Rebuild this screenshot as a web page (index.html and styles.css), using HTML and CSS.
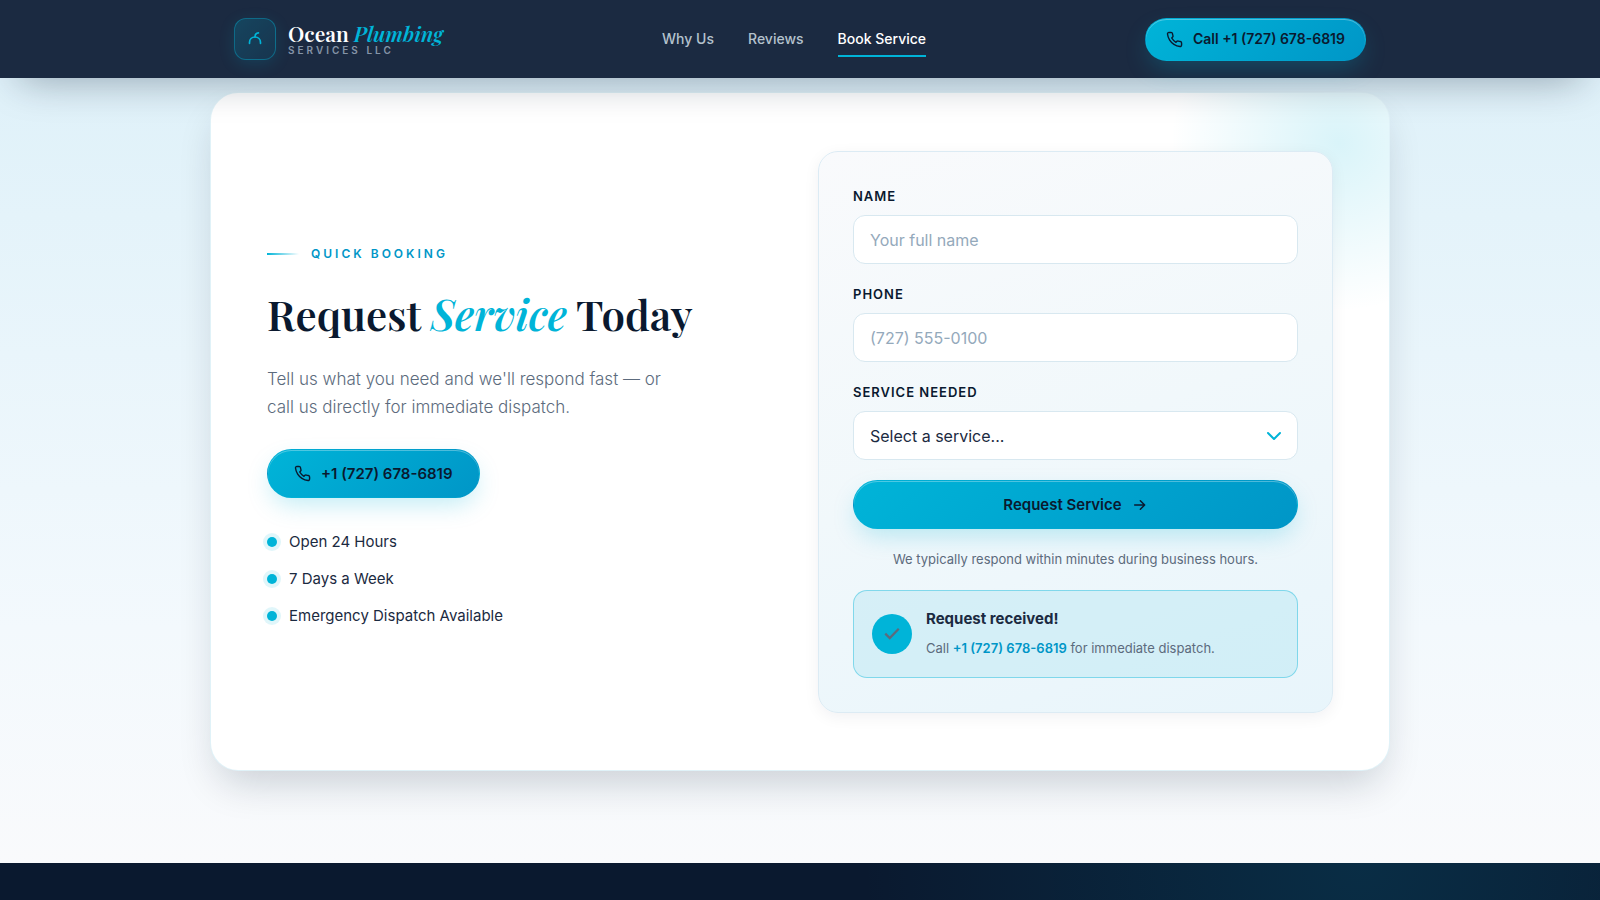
FILE: index.html
```html
<!DOCTYPE html>
<html lang="en">
<head>
    <meta charset="UTF-8">
    <meta name="viewport" content="width=device-width, initial-scale=1.0">
    <title>Ocean Plumbing Services LLC</title>
    <link rel="stylesheet" href="styles.css">
</head>
<body>
    <header class="site-header">
        <div class="container nav">
            <a href="#" class="brand">
                <span class="brand-mark">
                    <svg width="22" height="22" viewBox="0 0 22 22" fill="none" stroke="currentColor" stroke-width="1.7" stroke-linecap="round">
                        <path d="M5.500 15.300v-.8c0-3.200 2.300-5.500 5.500-5.500s5.500 2.300 5.500 5.500v.8"/>
                        <path d="M11 8.800c0-2.300 1.300-3.800 3.400-4"/>
                    </svg>
                </span>
                <span class="brand-text">
                    <span class="brand-name">Ocean <em>Plumbing</em></span>
                    <span class="brand-sub">Services LLC</span>
                </span>
            </a>
            <nav class="nav-links">
                <a href="#why">Why Us</a>
                <a href="#reviews">Reviews</a>
                <a href="#book" class="active">Book Service</a>
            </nav>
            <a href="tel:+17276786819" class="btn btn-nav">
                <svg width="17" height="17" viewBox="0 0 24 24" fill="none" stroke="currentColor" stroke-width="2" stroke-linecap="round" stroke-linejoin="round"><path d="M22 16.920v3a2 2 0 0 1-2.180 2 19.790 19.790 0 0 1-8.630-3.070 19.500 19.500 0 0 1-6-6 19.790 19.790 0 0 1-3.070-8.670A2 2 0 0 1 4.110 2h3a2 2 0 0 1 2 1.720 12.840 12.840 0 0 0 .7 2.810 2 2 0 0 1-.45 2.110L8.090 9.910a16 16 0 0 0 6 6l1.270-1.270a2 2 0 0 1 2.110-.45 12.840 12.840 0 0 0 2.810.7A2 2 0 0 1 22 16.920z"/></svg>
                Call +1 (727) 678-6819
            </a>
        </div>
    </header>

    <main class="booking" id="book">
        <div class="booking-card">
            <div class="booking-info">
                <p class="eyebrow">Quick Booking</p>
                <h1>Request <em>Service</em> Today</h1>
                <p class="lead">Tell us what you need and we'll respond fast — or call us directly for immediate dispatch.</p>
                <a href="tel:+17276786819" class="btn">
                    <svg width="17" height="17" viewBox="0 0 24 24" fill="none" stroke="currentColor" stroke-width="2" stroke-linecap="round" stroke-linejoin="round"><path d="M22 16.920v3a2 2 0 0 1-2.180 2 19.790 19.790 0 0 1-8.630-3.070 19.500 19.500 0 0 1-6-6 19.790 19.790 0 0 1-3.070-8.670A2 2 0 0 1 4.110 2h3a2 2 0 0 1 2 1.720 12.840 12.840 0 0 0 .7 2.810 2 2 0 0 1-.45 2.110L8.090 9.910a16 16 0 0 0 6 6l1.270-1.270a2 2 0 0 1 2.110-.45 12.840 12.840 0 0 0 2.810.7A2 2 0 0 1 22 16.920z"/></svg>
                    +1 (727) 678-6819
                </a>
                <ul class="perks">
                    <li>Open 24 Hours</li>
                    <li>7 Days a Week</li>
                    <li>Emergency Dispatch Available</li>
                </ul>
            </div>

            <form class="booking-form">
                <div class="field">
                    <label for="name">Name</label>
                    <input type="text" id="name" placeholder="Your full name">
                </div>
                <div class="field">
                    <label for="phone">Phone</label>
                    <input type="tel" id="phone" placeholder="(727) 555-0100">
                </div>
                <div class="field">
                    <label for="service">Service Needed</label>
                    <div class="select-wrap">
                        <select id="service">
                            <option value="">Select a service...</option>
                            <option>Drain Cleaning</option>
                            <option>Leak Repair</option>
                            <option>Water Heater</option>
                        </select>
                        <svg class="chevron" width="16" height="10" viewBox="0 0 16 10" fill="none" stroke="currentColor" stroke-width="2" stroke-linecap="round" stroke-linejoin="round"><path d="M2 2l6 6 6-6"/></svg>
                    </div>
                </div>
                <button type="button" class="btn">
                    Request Service
                    <svg width="16" height="16" viewBox="0 0 24 24" fill="none" stroke="currentColor" stroke-width="2.200" stroke-linecap="round" stroke-linejoin="round"><path d="M4 12h15M12.500 5.500L19 12l-6.500 6.500"/></svg>
                </button>
                <p class="form-note">We typically respond within minutes during business hours.</p>
                <div class="success">
                    <span class="success-icon">
                        <svg width="18" height="18" viewBox="0 0 24 24" fill="none" stroke="currentColor" stroke-width="3"><path d="M3 11.500l6 6L21 5"/></svg>
                    </span>
                    <div>
                        <strong>Request received!</strong>
                        <p>Call <a href="tel:+17276786819">+1 (727) 678-6819</a> for immediate dispatch.</p>
                    </div>
                </div>
            </form>
        </div>
    </main>

    <footer class="site-footer"></footer>
</body>
</html>
```

FILE: styles.css
```css
:root {
    --navy: #0a192f;
    --slate: #1b2a41;
    --cyan: #00b4d8;
    --blue: #0096c7;
    --muted: #5c6b7d;
    --line: #d8e8f0;
}
* {
    box-sizing: border-box;
    margin: 0;
    padding: 0;
}
body {
    display: flex;
    flex-direction: column;
    min-height: 100vh;
    font-family: Inter, sans-serif;
    font-size: 15px;
    line-height: 24px;
    color: var(--slate);
}
a {
    color: inherit;
    text-decoration: none;
}
svg {
    flex-shrink: 0;
}

/* Header */
.site-header {
    position: relative;
    z-index: 2;
    background: var(--slate);
    box-shadow: 0 20px 40px -20px rgba(10, 25, 47, 0.4);
}
.container {
    width: 100%;
    max-width: 1180px;
    margin: 0 auto;
    padding: 0 24px;
}
.nav {
    display: flex;
    align-items: center;
    justify-content: space-between;
    min-height: 78px;
}
.brand {
    display: flex;
    align-items: center;
    gap: 12px;
}
.brand-mark {
    display: flex;
    align-items: center;
    justify-content: center;
    width: 42px;
    height: 42px;
    color: var(--cyan);
    border: 1px solid rgba(0, 180, 216, 0.4);
    border-radius: 12px;
    background: linear-gradient(135deg, rgba(0, 180, 216, 0.2), rgba(0, 150, 199, 0.1));
    box-shadow: 0 4px 16px rgba(0, 180, 216, 0.15);
}
.brand-text {
    display: flex;
    flex-direction: column;
}
.brand-name {
    font-family: "Playfair Display", "Liberation Serif", serif;
    font-size: 21px;
    font-weight: 600;
    line-height: 22px;
    color: #fff;
}
.brand-name em {
    color: var(--cyan);
}
.brand-sub {
    font-size: 10px;
    font-weight: 600;
    line-height: 12px;
    letter-spacing: 3px;
    text-transform: uppercase;
    color: #8595a8;
}
.nav-links {
    display: flex;
    gap: 34px;
}
.nav-links a {
    padding: 4px 0;
    font-size: 14px;
    font-weight: 500;
    color: #b4c2cd;
    border-bottom: 2px solid transparent;
    border-top: 2px solid transparent;
}
.nav-links .active {
    color: #fff;
    border-bottom-color: var(--cyan);
}

/* Buttons */
.btn {
    display: inline-flex;
    align-items: center;
    justify-content: center;
    gap: 10px;
    min-height: 49px;
    padding: 0 26px;
    font-family: inherit;
    font-size: 15px;
    font-weight: 600;
    color: var(--navy);
    border: 1px solid transparent;
    border-radius: 999px;
    background: linear-gradient(135deg, var(--cyan), var(--blue));
    box-shadow: 0 10px 24px -4px rgba(0, 180, 216, 0.25), inset 0 1px 0 rgba(255, 255, 255, 0.3);
    cursor: pointer;
}
.btn-nav {
    min-height: 43px;
    padding: 0 20px;
    font-size: 14px;
}

/* Booking section */
.booking {
    padding: 14px 24px 92px;
    background: linear-gradient(180deg, #dff1f9, #f3f9fd 70%, #f9fafc);
}
.booking-card {
    position: relative;
    display: grid;
    grid-template-columns: 1fr 1fr;
    gap: 36px;
    max-width: 1180px;
    margin: 0 auto;
    padding: 58px 56px 57px;
    overflow: hidden;
    background: #fff;
    border: 1px solid rgba(0, 150, 199, 0.12);
    border-radius: 28px;
    box-shadow: 0 20px 40px -10px rgba(10, 25, 47, 0.2);
}
.booking-card::before {
    content: "";
    position: absolute;
    top: -120px;
    right: -120px;
    width: 340px;
    height: 340px;
    background: radial-gradient(circle, rgba(0, 180, 216, 0.15), transparent 70%);
}
.booking-info {
    display: flex;
    flex-direction: column;
    align-items: flex-start;
    justify-content: center;
}
.eyebrow {
    display: flex;
    align-items: center;
    gap: 12px;
    margin: 8px 0 26px;
    font-size: 12px;
    font-weight: 600;
    line-height: 20px;
    letter-spacing: 3px;
    text-transform: uppercase;
    color: var(--blue);
}
.eyebrow::before {
    content: "";
    width: 32px;
    height: 2px;
    background: linear-gradient(90deg, var(--cyan), transparent);
}
h1 {
    margin-bottom: 27px;
    font-family: "Playfair Display", "Liberation Serif", serif;
    font-size: 42px;
    font-weight: 600;
    line-height: 48px;
    color: var(--navy);
}
h1 em {
    color: var(--cyan);
}
.lead {
    max-width: 420px;
    margin-bottom: 28px;
    font-size: 17px;
    font-weight: 300;
    line-height: 28px;
    color: var(--muted);
}
.perks {
    display: flex;
    flex-direction: column;
    gap: 13px;
    margin-top: 32px;
    list-style: none;
}
.perks li {
    display: flex;
    align-items: center;
    gap: 12px;
}
.perks li::before {
    content: "";
    width: 10px;
    height: 10px;
    border-radius: 50%;
    background: var(--cyan);
    box-shadow: 0 0 0 4px rgba(0, 180, 216, 0.12);
}

/* Form */
.booking-form {
    position: relative;
    display: flex;
    flex-direction: column;
    gap: 20px;
    padding: 34px;
    background: linear-gradient(160deg, #f9fafc, #f1f8fb 50%, #e8f5fb);
    border: 1px solid #dcebf4;
    border-radius: 20px;
    box-shadow: 0 4px 16px rgba(10, 25, 47, 0.06);
}
.field {
    display: flex;
    flex-direction: column;
    gap: 8px;
}
.field label {
    font-size: 13px;
    font-weight: 600;
    line-height: 21px;
    letter-spacing: 1px;
    text-transform: uppercase;
    color: var(--navy);
}
.field input,
.field select {
    display: block;
    width: 100%;
    height: 49px;
    padding: 0 16px;
    font-family: inherit;
    font-size: 16px;
    color: var(--slate);
    background: #fff;
    border: 1px solid var(--line);
    border-radius: 12px;
    appearance: none;
}
.field input::placeholder {
    color: #94a9bb;
}
.select-wrap {
    position: relative;
}
.chevron {
    position: absolute;
    top: 20px;
    right: 16px;
    color: var(--cyan);
    pointer-events: none;
}
.form-note {
    font-size: 13px;
    line-height: 21px;
    text-align: center;
    color: var(--muted);
}
.success {
    display: flex;
    align-items: center;
    gap: 14px;
    padding: 18px;
    background: rgba(0, 180, 216, 0.1);
    border: 1px solid rgba(0, 180, 216, 0.4);
    border-radius: 14px;
}
.success-icon {
    display: flex;
    align-items: center;
    justify-content: center;
    width: 40px;
    height: 40px;
    color: var(--muted);
    border-radius: 50%;
    background: var(--cyan);
}
.success strong {
    display: block;
    margin-bottom: 8px;
    line-height: 20px;
}
.success p {
    font-size: 13px;
    line-height: 22px;
    color: var(--muted);
}
.success a {
    font-weight: 600;
    color: var(--blue);
}

.site-footer {
    flex: 1;
    min-height: 37px;
    background: radial-gradient(circle 500px at 85% 0, rgba(0, 180, 216, 0.13), transparent), var(--navy);
}
```
